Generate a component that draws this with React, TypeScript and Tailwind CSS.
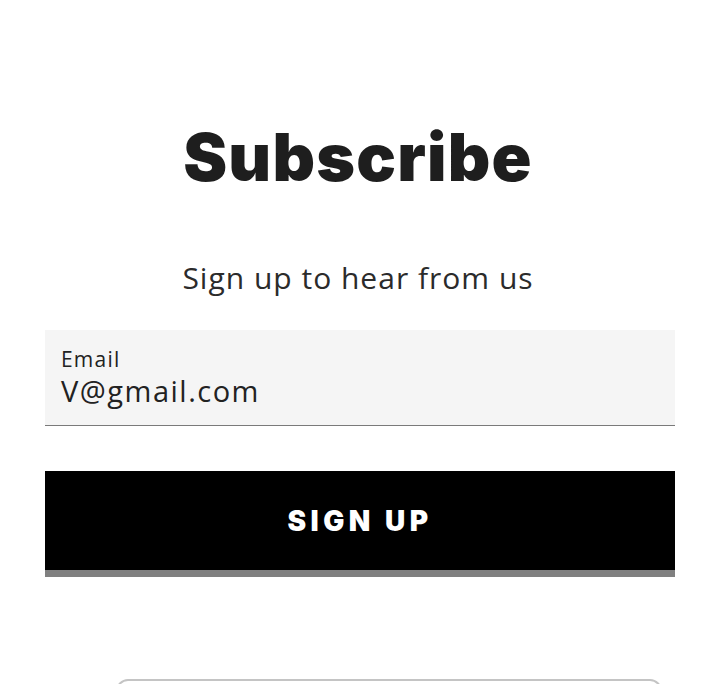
export default function App() {
  return (
    <div className="w-[716px] h-[684px] overflow-hidden bg-white flex flex-col" style={{ fontFamily: '"Open Sans", Inter, sans-serif' }}>
      <div className="h-[124px] shrink-0" />
      <h1
        className="shrink-0 text-center text-[66px] leading-[66px] font-black text-[#1e1e1e] tracking-[1.2px]"
        style={{ fontFamily: 'Inter, "Noto Sans", sans-serif' }}
      >
        Subscribe
      </h1>
      <p
        className="shrink-0 mt-[70px] text-center text-[30px] leading-[36px] text-[#2b2b2b] tracking-[1px]"
        style={{ fontFamily: '"Open Sans", sans-serif' }}
      >
        Sign up to hear from us
      </p>
      <div className="shrink-0 ml-[45px] w-[630px] mt-[34px] h-[96px] bg-[#f5f5f5] border-b border-[#7a7a7a] px-[16px] pt-[17px] flex flex-col gap-[3px]">
        <div className="text-[21px] leading-[24px] text-[#222] tracking-[1.2px]">Email</div>
        <div className="text-[29px] leading-[34px] text-[#222] tracking-[1.5px]">V@gmail.com</div>
      </div>
      <button className="shrink-0 ml-[45px] w-[630px] mt-[45px] h-[106px] bg-black border-b-[7px] border-[#808080] flex items-center justify-center">
        <span
          className="text-white text-[28px] font-black tracking-[4.5px]"
          style={{ fontFamily: 'Inter, sans-serif' }}
        >
          SIGN UP
        </span>
      </button>
      <div className="shrink-0 mt-[102px] w-[546px] h-[40px] rounded-t-[12px] border-2 border-[#c4c4c4] ml-[116px]" />
    </div>
  );
}
